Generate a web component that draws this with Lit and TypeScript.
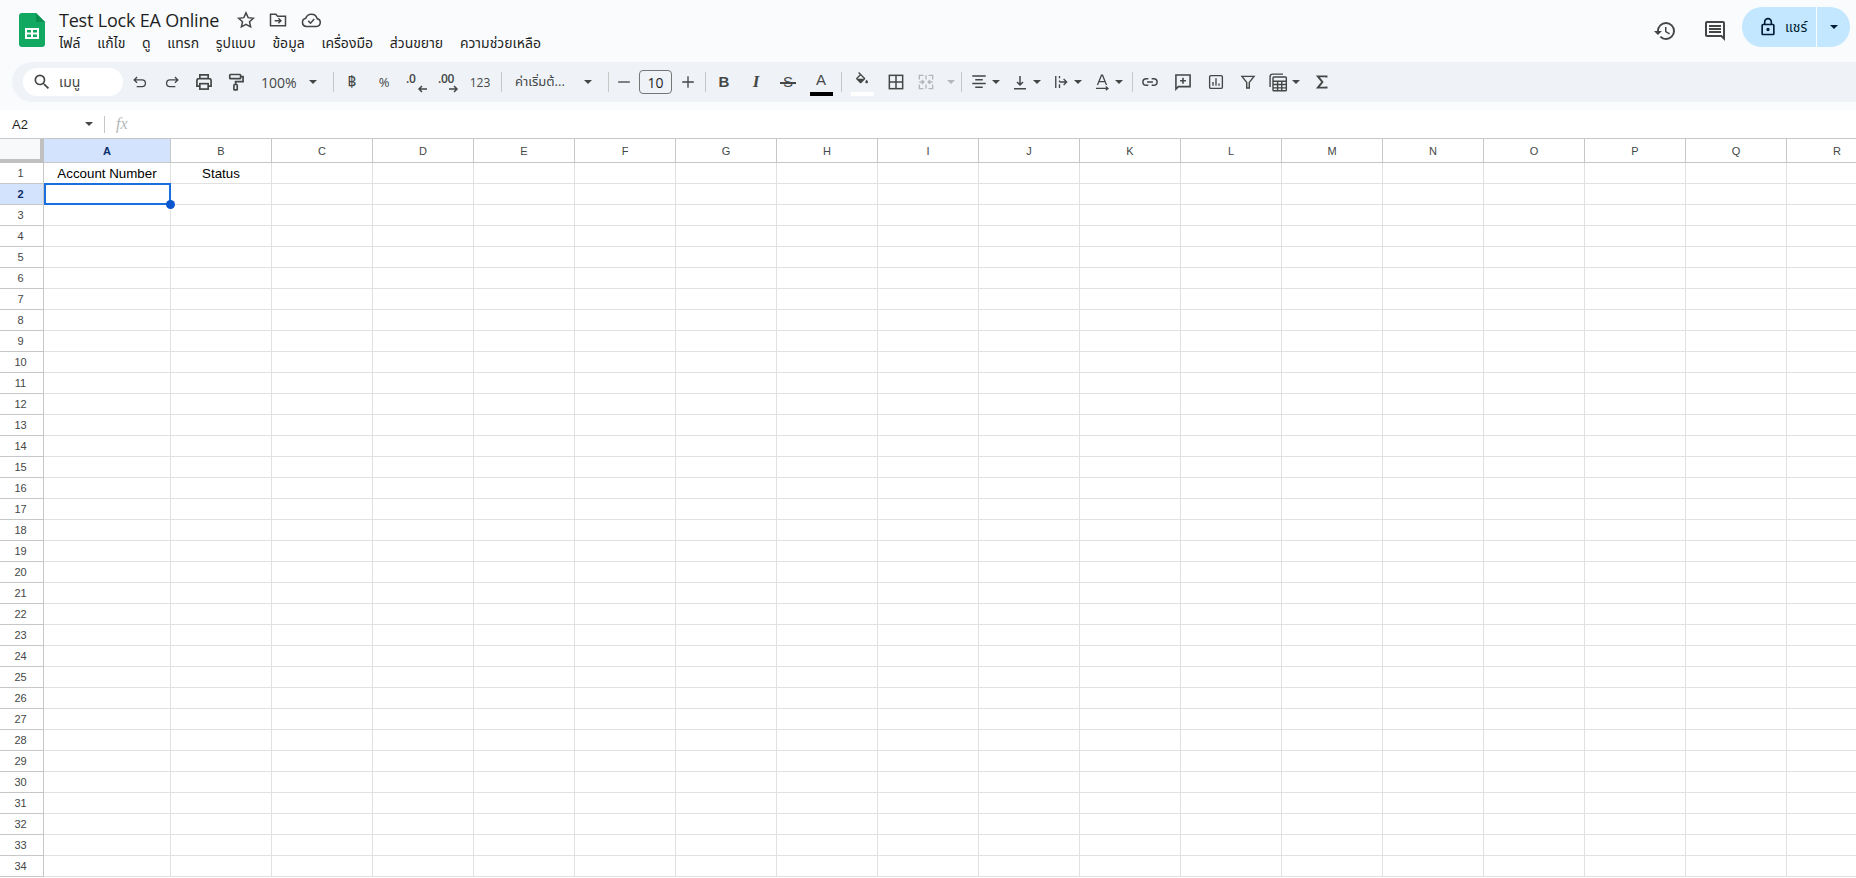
import { LitElement, html, css, svg } from "lit";
import { customElement } from "lit/decorators.js";

const ic = (content: unknown, size = 20, sw = 1.6) => html`<svg class="ic" width=${size} height=${size} viewBox="0 0 24 24" fill="none" stroke="currentColor" stroke-width=${sw}>${content}</svg>`;
const fillIc = (d: string, size = 20) => html`<svg class="ic" width=${size} height=${size} viewBox="0 0 24 24" fill="currentColor"><path d=${d}></path></svg>`;

const icons: Record<string, unknown> = {
  undo: ic(svg`<path d="M8.500 6 5 9.500 8.500 13M5 9.500h9.500a4 4 0 0 1 0 8H8"/>`),
  redo: ic(svg`<path d="M15.500 6 19 9.500 15.500 13M19 9.500H9.500a4 4 0 0 0 0 8H16"/>`),
  print: ic(svg`<path d="M7 8V3.500h10V8M7 17H3.500v-6.500A2.500 2.500 0 0 1 6 8h12a2.500 2.500 0 0 1 2.500 2.500V17H17"/><rect x="7" y="14" width="10" height="6.500"/>`, 20, 2),
  paint: ic(svg`<rect x="4.500" y="3" width="13" height="5" rx=".8"/><path d="M17.500 5.500H20.500v6h-9V15"/><rect x="9.500" y="15" width="4" height="6.500" rx=".8"/>`, 20, 2),
  minus: ic(svg`<path d="M5 12h14"/>`),
  plus: ic(svg`<path d="M5 12h14M12 5v14"/>`),
  fill: ic(svg`<path fill="currentColor" stroke="none" d="M16.560 8.940 7.620 0 6.210 1.410l2.380 2.380-5.150 5.150a1.490 1.490 0 0 0 0 2.120l5.500 5.500c.290.290.680.440 1.060.440s.770-.150 1.060-.440l5.500-5.500c.590-.580.590-1.530 0-2.120zM5.210 10 10 5.210 14.790 10H5.210zM19 11.500s-2 2.170-2 3.500c0 1.100.900 2 2 2s2-.900 2-2c0-1.330-2-3.500-2-3.500z"/>`, 16),
  borders: ic(svg`<rect x="4" y="4" width="16" height="16"/><path d="M12 4v16M4 12h16"/>`, 20, 1.800),
  merge: ic(svg`<path d="M4 9V4h5M15 4h5v5M4 15v5h5M15 20h5v-5M4 12h5M7 9.500l2.500 2.500L7 14.500M20 12h-5M17 9.500 14.500 12l2.500 2.500"/><path d="M12 4v5M12 15v5"/>`, 20),
  align: ic(svg`<path d="M3 4h18M7 9h10M3 14h18M7 19h10"/>`, 18, 2),
  valign: ic(svg`<path d="M4 21h16M12 4v12M8 12l4 4 4-4"/>`, 18, 2),
  wrap: ic(svg`<path d="M5 4v16M10 4v3M10 10v2M10 15v5M10 12h9M15.500 8l4 4-4 4"/>`, 18, 1.800),
  rot: ic(svg`<path d="M6 16 11.300 3h1.400L18 16M8 11.500h8M4 20.500h15M17 18l3 2.500-3 2.500"/>`, 18, 1.700),
  link: ic(svg`<path d="M10 8H7.500a4 4 0 0 0 0 8H10M14 8h2.500a4 4 0 0 1 0 8H14M8.500 12h7"/>`, 20, 1.800),
  comment: ic(svg`<path d="M3.500 3.500h17v14H6.500l-3 3zM12 7v7M8.500 10.500h7"/>`, 20, 1.900),
  chart: ic(svg`<rect x="3.500" y="3.500" width="17" height="17" rx="1.500"/><path d="M8 17v-5M12 17V7M16 17v-3"/>`, 18, 1.800),
  filter: ic(svg`<path d="M4 4.500h16l-6.300 8V20h-3.400v-7.500z"/>`, 18, 1.900),
  table: ic(svg`<path d="M2.500 18V5.500a3 3 0 0 1 3-3H18"/><rect x="6" y="6" width="16" height="16.500" rx="1"/><path d="M6 11h16M6 15h16M6 19h16M11.500 11v11M16.500 11v11"/>`, 20, 1.700),
  sigma: ic(svg`<path d="M18 6V4.500H6.500l6 7.500-6 7.500H18V18" stroke-width="2.600"/>`, 18),
};

const caret = html`<span class="caret"></span>`;
const dec = (t: string, dir: "l" | "r") => html`<span class="dec"><span class="dec-t">${t}</span><svg class="dec-a" width="10" height="8" viewBox="0 0 10 8" fill="none" stroke="currentColor" stroke-width="1.500">${dir === "l" ? svg`<path d="M10 4H2M5 1 2 4l3 3"/>` : svg`<path d="M0 4h8M5 1l3 3-3 3"/>`}</svg></span>`;
const sw = (c: unknown, bar: string) => html`<span class="sw">${c}<span class="sw-bar" style="background:${bar}"></span></span>`;

type Item = [number, unknown, string?];
const tools: Item[] = [
  [1, ""],
  [32, icons.undo], [32, icons.redo], [32, icons.print], [32, icons.paint],
  [78, html`<span class="zoom">100%</span>${caret}`, "between"],
  [6, html`<i class="sep"></i>`],
  [32, html`<span class="t baht">฿</span>`], [32, html`<span class="t">%</span>`],
  [32, dec(".0", "l")], [32, dec(".00", "r")], [32, html`<span class="t sm">123</span>`],
  [10, html`<i class="sep"></i>`],
  [99, html`<span class="fontname">ค่าเริ่มต้...</span>${caret}`, "between"],
  [6, html`<i class="sep"></i>`],
  [26, icons.minus],
  [37, html`<span class="size">10</span>`],
  [28, icons.plus],
  [6, html`<i class="sep"></i>`],
  [32, html`<b class="fmt">B</b>`], [32, html`<i class="fmt it">I</i>`],
  [32, html`<span class="fmt strike">S</span>`],
  [34, sw(html`<span class="fmt a">A</span>`, "#000")],
  [6, html`<i class="sep"></i>`],
  [36, sw(icons.fill, "#fff")],
  [32, icons.borders],
  [46, html`<span class="dis">${icons.merge}</span>${caret}`, "dis"],
  [6, html`<i class="sep"></i>`],
  [2, ""],
  [41, html`${icons.align}${caret}`, "ic18"], [41, html`${icons.valign}${caret}`, "ic18"],
  [41, html`${icons.wrap}${caret}`, "ic18"], [41, html`${icons.rot}${caret}`, "ic18"],
  [4, html`<i class="sep"></i>`],
  [32, icons.link], [34, icons.comment], [32, icons.chart], [32, icons.filter],
  [44, html`${icons.table}${caret}`, "tbl"],
  [28, icons.sigma],
];

const MENU = ["ไฟล์", "แก้ไข", "ดู", "แทรก", "รูปแบบ", "ข้อมูล", "เครื่องมือ", "ส่วนขยาย", "ความช่วยเหลือ"];
const COLS = "ABCDEFGHIJKLMNOPQR".split("");
const ROWS = Array.from({ length: 34 }, (_, i) => i + 1);

@customElement("app-root")
export class AppRoot extends LitElement {
  static styles = css`
    :host { display: flex; flex-direction: column; height: 878px; overflow: hidden; background: #f9fbfd; font-family: "Open Sans", "Noto Sans", "Noto Sans Thai", Roboto, "DejaVu Sans", sans-serif; color: #1f1f1f; }
    .top { height: 62px; display: flex; flex: none; }
    .logo { margin: 13px 0 0 19px; width: 26px; height: 34px; flex: none; }
    .doc { margin-left: 14px; flex: 1; display: flex; flex-direction: column; }
    .title-row { display: flex; align-items: center; height: 24px; margin-top: 8px; }
    .title { font-size: 18px; width: 177px; white-space: nowrap; letter-spacing: -.2px; }
    .title-row svg { color: #444746; margin-right: 12px; }
    .menu { display: flex; gap: 16.700px; font-size: 14px; height: 22px; align-items: center; color: #1f1f1f; }
    .actions { display: flex; align-items: center; flex: none; color: #444746; }
    .act { width: 50px; display: flex; justify-content: center; }
    .share { margin: 0 6px 8px 2px; width: 108px; height: 40px; border-radius: 20px; background: #c2e7ff; color: #001d35; display: flex; align-items: center; }
    .share-main { width: 75px; height: 40px; border-right: 1px solid #f9fbfd; display: flex; align-items: center; gap: 7px; padding-left: 16px; box-sizing: border-box; font-size: 14px; }
    .share-drop { flex: 1; display: flex; justify-content: center; }
    .share .caret { border-top-color: #001d35; }

    .bar { margin-left: 12px; height: 40px; flex: none; background: #eff3f8; border-radius: 20px 0 0 20px; display: flex; align-items: center; padding-left: 11px; color: #444746; }
    .pill { width: 100px; height: 28px; flex: none; box-sizing: border-box; background: #fff; border-radius: 14px; display: flex; align-items: center; gap: 7px; padding-left: 9px; font-size: 14px; color: #444746; }
    .tb { height: 40px; flex: none; display: flex; align-items: center; justify-content: center; gap: 3px; box-sizing: border-box; }
    .tb.ic18 { gap: 4px; padding-right: 3px; }
    .tb.tbl { gap: 4px; padding-right: 5px; }
    .tb.between { justify-content: space-between; padding: 0 13px 0 9px; }
    .tb.dis { gap: 11px; }
    .tb.dis .caret { border-top-color: #b4b7ba; }
    .dis { display: flex; color: #b4b7ba; }
    .ic { display: block; flex: none; }
    .sep { display: block; width: 1px; height: 20px; background: #c7c7c7; }
    .caret { display: block; flex: none; width: 0; height: 0; border-left: 4.500px solid transparent; border-right: 4.500px solid transparent; border-top: 4.500px solid #444746; }
    .zoom { font-size: 14px; }
    .fontname { font-size: 13px; color: #444746; white-space: nowrap; }
    .t { font-size: 13px; }
    .t.baht { font-size: 15px; }
    .t.sm { font-size: 12px; }
    .size { width: 33px; height: 24px; box-sizing: border-box; border: 1px solid #747775; border-radius: 4px; display: flex; align-items: center; justify-content: center; font-size: 14px; color: #1f1f1f; }
    .fmt { font-family: "Liberation Sans", sans-serif; font-size: 15px; color: #444746; line-height: 18px; }
    .fmt.it { font-family: "Liberation Serif", serif; font-weight: 700; font-size: 17px; }
    .strike { position: relative; width: 16px; text-align: center; }
    .strike::after { content: ""; position: absolute; left: 0; right: 0; top: 9px; height: 1.500px; background: #444746; }
    .fmt.a { font-size: 15px; line-height: 16px; font-weight: 400; }
    .sw { display: flex; flex-direction: column; align-items: center; width: 23px; height: 28px; position: relative; padding-top: 4px; box-sizing: border-box; }
    .sw-bar { position: absolute; left: 0; right: 0; bottom: 0; height: 4px; }
    .dec { position: relative; width: 24px; height: 24px; }
    .dec-t { position: absolute; left: 2px; top: 2px; font-size: 12px; font-weight: 600; line-height: 14px; letter-spacing: -.3px; }
    .dec-a { position: absolute; right: 1px; bottom: 1px; }

    .fbar { margin-top: 8px; height: 28px; flex: none; background: #fff; display: flex; align-items: center; font-size: 13px; color: #1f1f1f; }
    .name { width: 93px; padding-left: 12px; box-sizing: border-box; display: flex; align-items: center; justify-content: space-between; font-family: "Liberation Sans", sans-serif; }
    .fbar .sep { height: 17px; margin-left: 11px; }
    .fx { margin-left: 11px; font-family: "Liberation Serif", serif; font-style: italic; font-size: 16px; color: #b4b7ba; }

    .grid { flex: 1; display: grid; grid-template-columns: 44px 127px repeat(17, 101px); grid-template-rows: 24px repeat(34, 21px); background: #fff; overflow: hidden; font-family: "Liberation Sans", sans-serif; border-top: 1px solid #c7c7c7; }
    .c { box-sizing: border-box; border-right: 1px solid #e1e1e1; border-bottom: 1px solid #e1e1e1; font-size: 13.330px; display: flex; align-items: center; justify-content: center; color: #000; min-width: 0; white-space: nowrap; }
    .h { border-color: #c7c7c7; font-size: 11px; color: #444746; }
    .rh { padding-right: 2px; }
    .sel { background: #d3e3fd; color: #0b2e6b; font-weight: 700; }
    .corner { background: #f8f9fa; border-right: 4px solid #c0c0c0; border-bottom: 4px solid #c0c0c0; }
    .active { position: relative; border: 2px solid #1a6fe0; margin-top: -1px; }
    .active::after { content: ""; position: absolute; right: -6px; bottom: -6px; width: 9px; height: 9px; border-radius: 50%; background: #0b57d0; }
  `;

  render() {
    return html`
      <div class="top">
        <svg class="logo" viewBox="0 0 26 34">
          <path fill="#11a861" d="M3 0h14l9 9v22a3 3 0 0 1-3 3H3a3 3 0 0 1-3-3V3a3 3 0 0 1 3-3z"/>
          <path fill="#0b8f50" d="M17 0l9 9h-9z"/>
          <path fill="#fff" d="M6 15h14v11H6z"/>
          <path fill="#11a861" d="M8 17h4v2.500H8zM14 17h4v2.500h-4zM8 21.500h4V24H8zM14 21.500h4V24h-4z"/>
        </svg>
        <div class="doc">
          <div class="title-row">
            <span class="title">Test Lock EA Online</span>
            <svg width="20" height="20" viewBox="0 0 24 24" fill="none" stroke="currentColor" stroke-width="1.800"><path d="M12 3.500l2.600 5.700 6.200.7-4.600 4.200 1.300 6.100L12 17.100l-5.500 3.100 1.300-6.100-4.600-4.200 6.200-.7z"/></svg>
            <svg width="20" height="20" viewBox="0 0 24 24" fill="none" stroke="currentColor" stroke-width="1.800"><path d="M3 5h6.500l2 2.500H21V19H3z"/><path d="M8 13h7M12.500 10l3 3-3 3"/></svg>
            <svg width="22" height="22" viewBox="0 0 24 24" fill="none" stroke="currentColor" stroke-width="1.700"><path d="M7 19a4.500 4.500 0 0 1-.7-8.900A6.500 6.500 0 0 1 18.700 10.500 4.300 4.300 0 0 1 18 19z"/><path d="M9 13l2.500 2.500L15.500 11"/></svg>
          </div>
          <div class="menu">${MENU.map((m) => html`<span>${m}</span>`)}</div>
        </div>
        <div class="actions">
          <div class="act">${fillIc("M13 3a9 9 0 0 0-9 9H1l3.890 3.890.07.140L9 12H6c0-3.870 3.130-7 7-7s7 3.130 7 7-3.130 7-7 7c-1.930 0-3.680-.790-4.940-2.060l-1.420 1.420A8.954 8.954 0 0 0 13 21a9 9 0 0 0 0-18zm-1 5v5l4.280 2.540.720-1.210-3.500-2.080V8H12z", 24)}</div>
          <div class="act">${fillIc("M21.990 4c0-1.100-.890-2-1.990-2H4c-1.100 0-2 .900-2 2v12c0 1.100.900 2 2 2h14l4 4-.010-18zM20 4v13.170L18.830 16H4V4h16zM6 12h12v2H6zm0-3h12v2H6zm0-3h12v2H6z", 24)}</div>
          <div class="share">
            <div class="share-main">
              <svg width="20" height="20" viewBox="0 0 24 24" fill="currentColor"><path d="M18 8h-1V6A5 5 0 0 0 7 6v2H6a2 2 0 0 0-2 2v10a2 2 0 0 0 2 2h12a2 2 0 0 0 2-2V10a2 2 0 0 0-2-2zM9 6a3 3 0 0 1 6 0v2H9V6zm9 14H6V10h12v10zm-6-3a2 2 0 1 0 0-4 2 2 0 0 0 0 4z"/></svg>
              <span>แชร์</span>
            </div>
            <div class="share-drop">${caret}</div>
          </div>
        </div>
      </div>

      <div class="bar">
        <div class="pill">${fillIc("M15.500 14h-.790l-.280-.270A6.471 6.471 0 0 0 16 9.500 6.500 6.500 0 1 0 9.500 16c1.610 0 3.090-.590 4.230-1.570l.270.280v.790l5 4.990L20.490 19l-4.990-5zm-6 0C7.010 14 5 11.990 5 9.500S7.010 5 9.500 5 14 7.010 14 9.500 11.990 14 9.500 14z", 20)}<span>เมนู</span></div>
        ${tools.map(([w, c, cls]) => html`<div class="tb ${cls ?? ""}" style="width:${w}px">${c}</div>`)}
      </div>

      <div class="fbar">
        <div class="name"><span>A2</span>${caret}</div>
        <i class="sep"></i>
        <span class="fx">fx</span>
      </div>

      <div class="grid">
        <div class="c corner"></div>
        ${COLS.map((c, i) => html`<div class="c h ${i === 0 ? "sel" : ""}">${c}</div>`)}
        ${ROWS.map((r) => html`
          <div class="c h rh ${r === 2 ? "sel" : ""}">${r}</div>
          ${COLS.map((_, i) => {
            const text = r === 1 && i === 0 ? "Account Number" : r === 1 && i === 1 ? "Status" : "";
            return html`<div class="c ${r === 2 && i === 0 ? "active" : ""}">${text}</div>`;
          })}
        `)}
      </div>
    `;
  }
}
